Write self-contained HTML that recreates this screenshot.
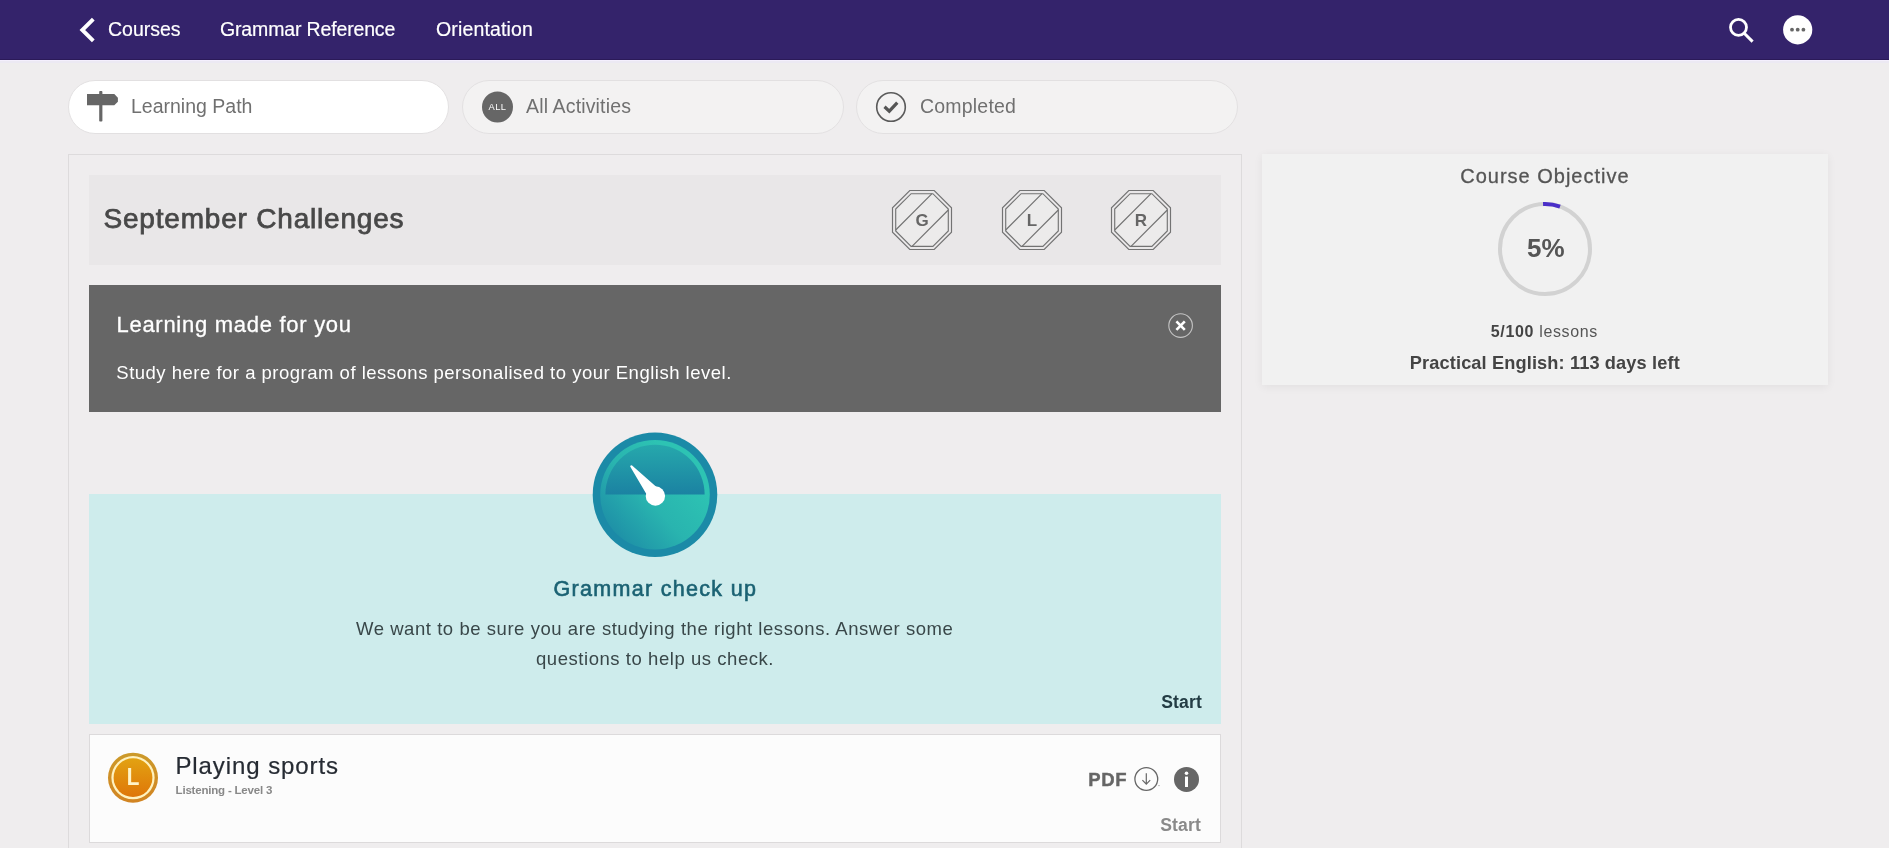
<!DOCTYPE html>
<html lang="en">
<head>
<meta charset="utf-8">
<title>Learning Path</title>
<style>
html,body{margin:0;padding:0;}
body{width:1889px;height:848px;overflow:hidden;background:#efedee;font-family:"Liberation Sans",sans-serif;position:relative;}
#wrap{position:absolute;left:0;top:0;width:1889px;height:848px;will-change:transform;}
.abs{position:absolute;}
.t{position:absolute;white-space:nowrap;line-height:1;margin:0;padding:0;}
#hdr{left:0;top:0;width:1889px;height:60px;background:#34236b;box-shadow:0 -1px 0 #2b1a58 inset,0 1px 0 #f4effd,0 3px 0 #ece9f3;}
.nav{color:#fff;font-size:19.5px;-webkit-text-stroke:0.2px #fff;}
.pill{position:absolute;box-sizing:border-box;top:80px;height:54px;width:380.5px;border:1px solid #e2e0e1;border-radius:27px;background:#f3f2f2;}
.pill.on{background:#fff;}
.pl{color:#707070;font-size:19.5px;}
#panel{left:68px;top:154px;width:1172px;height:720px;border:1px solid #dddbdc;background:#efedee;}
#sept{left:89px;top:175px;width:1132px;height:90px;background:#e9e7e8;}
#banner{left:89px;top:285px;width:1132px;height:127px;background:#666666;}
#teal{left:89px;top:494px;width:1132px;height:230px;background:#ceecec;}
#card{left:89px;top:734px;width:1130px;height:107px;background:#fcfcfc;border:1px solid #dcdadb;}
#obj{left:1262px;top:154px;width:566px;height:231px;background:#f1f1f1;box-shadow:0 2px 9px rgba(0,0,0,0.06);}
</style>
</head>
<body>
<div id="wrap">
<!-- header -->
<div id="hdr" class="abs"></div>
<svg class="abs" style="left:76px;top:14px" width="24" height="32" viewBox="0 0 24 32"><path d="M17.3 5.2 L6.3 16 L17.3 26.8" fill="none" stroke="#fff" stroke-width="3.9" stroke-linecap="butt" stroke-linejoin="miter"/></svg>
<span id="n1" class="t nav" style="left:108px;top:20px">Courses</span>
<span id="n2" class="t nav" style="letter-spacing:-0.15px;left:220px;top:20px">Grammar Reference</span>
<span id="n3" class="t nav" style="letter-spacing:0.15px;left:436px;top:20px">Orientation</span>
<svg class="abs" style="left:1724px;top:13.1px" width="34" height="34" viewBox="0 0 34 34"><circle cx="14.5" cy="14.3" r="8" fill="none" stroke="#fff" stroke-width="2.8"/><path d="M20.2 20.2 L28.6 28.6" stroke="#fff" stroke-width="3" stroke-linecap="butt"/></svg>
<svg class="abs" style="left:1782px;top:14px" width="32" height="32" viewBox="0 0 32 32"><circle cx="15.7" cy="15.8" r="14.6" fill="#fff"/><circle cx="10" cy="15.7" r="1.9" fill="#666"/><circle cx="15.7" cy="15.7" r="1.9" fill="#666"/><circle cx="21.4" cy="15.7" r="1.9" fill="#666"/></svg>

<!-- tabs -->
<div class="pill on" style="left:68px;width:381px"></div>
<div class="pill" style="left:462px;width:382px"></div>
<div class="pill" style="left:856px;width:382px"></div>
<svg class="abs" style="left:84px;top:88px" width="38" height="36" viewBox="0 0 38 36"><path d="M15.2 3.9 a0.8 0.8 0 0 1 0.8 -0.8 h1.6 a0.8 0.8 0 0 1 0.8 0.8 v2.2 h11.9 l3.6 3.6 v4 l-3.6 3.6 H18.4 v15.4 a0.8 0.8 0 0 1 -0.8 0.8 h-1.6 a0.8 0.8 0 0 1 -0.8 -0.8 v-15.4 H3 V6.1 h12.2 z" fill="#666"/></svg>
<span id="p1" class="t pl" style="left:131px;top:97px">Learning Path</span>
<svg class="abs" style="left:480px;top:89.5px" width="34" height="34" viewBox="0 0 34 34"><circle cx="17.5" cy="17" r="15.5" fill="#666"/><text x="17.5" y="20.4" text-anchor="middle" font-family="Liberation Sans, sans-serif" font-size="9.3" fill="#fff" letter-spacing="0.5">ALL</text></svg>
<span id="p2" class="t pl" style="left:526px;top:97px;letter-spacing:0.15px">All Activities</span>
<svg class="abs" style="left:874px;top:89.5px" width="34" height="34" viewBox="0 0 34 34"><circle cx="17" cy="17" r="14.3" fill="none" stroke="#5a5a5a" stroke-width="1.6"/><path d="M10.5 16.8 L15.3 21.2 L23.3 12.6" fill="none" stroke="#555" stroke-width="3.2" stroke-linejoin="miter"/></svg>
<span id="p3" class="t pl" style="left:920px;top:97px;letter-spacing:0.2px">Completed</span>

<!-- main panel -->
<div id="panel" class="abs"></div>
<div id="sept" class="abs"></div>
<span id="s1" class="t" style="left:103.5px;top:205.2px;font-size:28px;letter-spacing:0.8px;color:#484848;-webkit-text-stroke:0.75px #484848">September Challenges</span>

<svg class="abs" style="left:890px;top:188px" width="64" height="64" viewBox="0 0 64 64"><g fill="none" stroke="#737373" stroke-width="1.15"><polygon points="19.78,2.50 44.22,2.50 61.50,19.78 61.50,44.22 44.22,61.50 19.78,61.50 2.50,44.22 2.50,19.78"/><polygon fill="#ecebeb" points="21.11,5.70 42.89,5.70 58.30,21.11 58.30,42.89 42.89,58.30 21.11,58.30 5.70,42.89 5.70,21.11"/><path d="M5.7 42 L42 5.7 M22 58.3 L58.3 22"/></g><text x="32" y="38.2" text-anchor="middle" font-family="Liberation Sans, sans-serif" font-weight="bold" font-size="17" fill="#666">G</text></svg>
<svg class="abs" style="left:1000px;top:188px" width="64" height="64" viewBox="0 0 64 64"><g fill="none" stroke="#737373" stroke-width="1.15"><polygon points="19.78,2.50 44.22,2.50 61.50,19.78 61.50,44.22 44.22,61.50 19.78,61.50 2.50,44.22 2.50,19.78"/><polygon fill="#ecebeb" points="21.11,5.70 42.89,5.70 58.30,21.11 58.30,42.89 42.89,58.30 21.11,58.30 5.70,42.89 5.70,21.11"/><path d="M5.7 42 L42 5.7 M22 58.3 L58.3 22"/></g><text x="32" y="38.2" text-anchor="middle" font-family="Liberation Sans, sans-serif" font-weight="bold" font-size="17" fill="#666">L</text></svg>
<svg class="abs" style="left:1109px;top:188px" width="64" height="64" viewBox="0 0 64 64"><g fill="none" stroke="#737373" stroke-width="1.15"><polygon points="19.78,2.50 44.22,2.50 61.50,19.78 61.50,44.22 44.22,61.50 19.78,61.50 2.50,44.22 2.50,19.78"/><polygon fill="#ecebeb" points="21.11,5.70 42.89,5.70 58.30,21.11 58.30,42.89 42.89,58.30 21.11,58.30 5.70,42.89 5.70,21.11"/><path d="M5.7 42 L42 5.7 M22 58.3 L58.3 22"/></g><text x="32" y="38.2" text-anchor="middle" font-family="Liberation Sans, sans-serif" font-weight="bold" font-size="17" fill="#666">R</text></svg>
<div id="banner" class="abs"></div>
<span id="b1" class="t" style="left:116.5px;top:314px;font-size:22px;letter-spacing:0.72px;color:#fff;-webkit-text-stroke:0.3px #fff">Learning made for you</span>
<span id="b2" class="t" style="left:116.3px;top:364px;font-size:18.5px;letter-spacing:0.5px;color:#fff">Study here for a program of lessons personalised to your English level.</span>

<svg class="abs" style="left:1166px;top:311px" width="30" height="30" viewBox="0 0 30 30"><circle cx="14.6" cy="14.6" r="11.8" fill="none" stroke="#c4c4c4" stroke-width="1.1"/><path d="M10.4 10.4 L18.8 18.8 M18.8 10.4 L10.4 18.8" stroke="#fff" stroke-width="2.6"/></svg>
<div id="teal" class="abs"></div>
<svg class="abs" style="left:590px;top:430px" width="130" height="130" viewBox="0 0 130 130"><defs><linearGradient id="gt" x1="0" y1="0" x2="0" y2="0.5"><stop offset="0" stop-color="#26a8ac"/><stop offset="1" stop-color="#1b82a2"/></linearGradient><linearGradient id="gb" x1="0.9" y1="0.4" x2="0.25" y2="1"><stop offset="0" stop-color="#2dc3b3"/><stop offset="0.5" stop-color="#29b4af"/><stop offset="1" stop-color="#1e90a7"/></linearGradient><clipPath id="ct"><rect x="0" y="0" width="130" height="64.4"/></clipPath></defs><circle cx="65" cy="64.7" r="62.3" fill="#1b8aa7"/><circle cx="65" cy="64.7" r="54.8" fill="url(#gb)"/><circle cx="65" cy="64.4" r="49.6" fill="url(#gt)" clip-path="url(#ct)"/><path d="M40.3 36.8 A1.1 1.1 0 0 1 42.1 35.6 L71.6 61.4 L60.2 70.6 Z" fill="#fff"/><circle cx="65.4" cy="66" r="9.7" fill="#fff"/></svg>
<span id="g1" class="t" style="left:553.6px;top:579px;font-size:21.5px;letter-spacing:1.3px;color:#1b6273;-webkit-text-stroke:0.6px #1b6273">Grammar check up</span>
<span id="g2" class="t" style="left:356px;top:619.8px;font-size:18.5px;letter-spacing:0.55px;color:#394749">We want to be sure you are studying the right lessons. Answer some</span>
<span id="g3" class="t" style="left:536px;top:649.8px;font-size:18.5px;letter-spacing:0.55px;color:#394749">questions to help us check.</span>
<span id="g4" class="t" style="left:1161.2px;top:694.4px;font-size:17.6px;letter-spacing:0.15px;color:#233c44;font-weight:bold">Start</span>

<div id="card" class="abs"></div>
<svg class="abs" style="left:106px;top:750px" width="54" height="56" viewBox="0 0 54 56"><defs><linearGradient id="lb" x1="0" y1="0" x2="0" y2="1"><stop offset="0" stop-color="#e2a212"/><stop offset="1" stop-color="#df7608"/></linearGradient><linearGradient id="lr" x1="0" y1="0" x2="0" y2="1"><stop offset="0" stop-color="#cc9a2a"/><stop offset="1" stop-color="#d28422"/></linearGradient></defs><circle cx="27" cy="27.7" r="25" fill="url(#lr)"/><circle cx="27" cy="27.7" r="21.6" fill="#fff2bf"/><circle cx="27" cy="27.7" r="19.4" fill="url(#lb)"/><text transform="translate(27.1 34.9) scale(0.9 1)" x="0" y="0" text-anchor="middle" font-family="Liberation Sans, sans-serif" font-weight="bold" font-size="23" fill="#fff4c8">L</text></svg>
<span id="c1" class="t" style="left:175.4px;top:753.9px;font-size:24px;letter-spacing:0.92px;color:#262b33;-webkit-text-stroke:0.2px #262b33">Playing sports</span>
<span id="c2" class="t" style="left:175.6px;top:785px;font-size:11.5px;letter-spacing:-0.2px;color:#888;font-weight:bold">Listening - Level 3</span>
<span id="c3" class="t" style="left:1088.3px;top:771px;font-size:18.5px;letter-spacing:0.6px;color:#666;font-weight:bold;-webkit-text-stroke:0.4px #666">PDF</span>
<svg class="abs" style="left:1132px;top:765.4px" width="30" height="28" viewBox="0 0 30 28"><circle cx="14.3" cy="14" r="11.4" fill="none" stroke="#666" stroke-width="1.3"/><path d="M14.3 8.2 V19 M10.4 15.2 L14.3 19.2 L18.2 15.2" fill="none" stroke="#666" stroke-width="1.2"/><circle cx="27" cy="20.6" r="0.6" fill="#888"/></svg>
<svg class="abs" style="left:1172px;top:765px" width="28" height="28" viewBox="0 0 28 28"><circle cx="14.5" cy="14.4" r="12.5" fill="#666"/><circle cx="14.5" cy="8.3" r="1.8" fill="#fff"/><rect x="13" y="11.6" width="3" height="10.4" fill="#fff"/></svg>
<span id="c4" class="t" style="left:1160.2px;top:817.2px;font-size:17.6px;letter-spacing:0.15px;color:#8a8a8a;font-weight:bold">Start</span>

<!-- course objective -->
<div id="obj" class="abs"></div>
<span id="o1" class="t" style="left:1460.2px;top:166.4px;font-size:20px;letter-spacing:1.0px;color:#555;-webkit-text-stroke:0.3px #555">Course Objective</span>
<svg class="abs" style="left:1495px;top:199px" width="100" height="100" viewBox="0 0 100 100"><circle cx="50" cy="50" r="45" fill="none" stroke="#d2d2d2" stroke-width="4"/><path d="M48.04 5.04 A45 45 0 0 1 65.02 7.58" fill="none" stroke="#4a2ec8" stroke-width="4"/></svg>
<span id="o2" class="t" style="left:1527px;top:235px;font-size:26px;color:#555;font-weight:bold">5%</span>
<span id="o3" class="t" style="left:1490.8px;top:324px;font-size:16px;letter-spacing:0.65px;color:#555"><b style="color:#444">5/100</b> lessons</span>
<span id="o4" class="t" style="left:1409.8px;top:353.6px;font-size:18.2px;letter-spacing:0.13px;color:#444;font-weight:bold">Practical English: 113 days left</span>
</div>
</body>
</html>
